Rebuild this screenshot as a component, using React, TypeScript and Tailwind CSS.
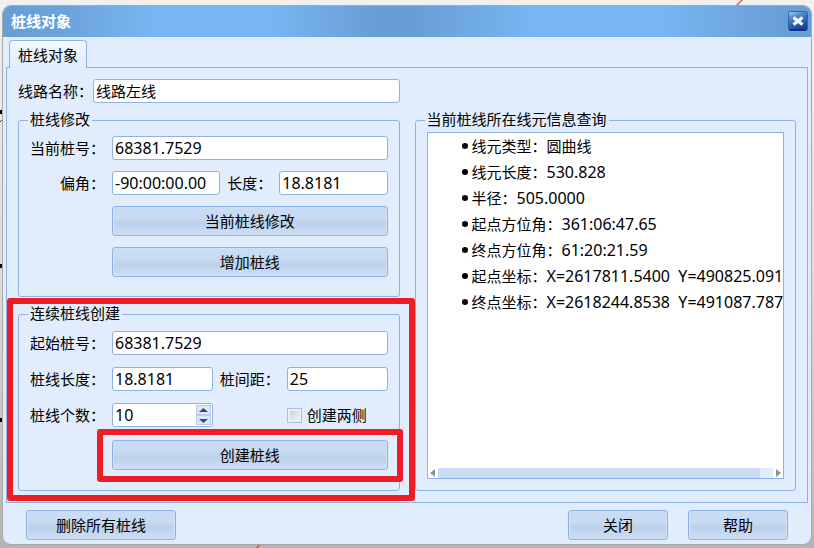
import type { ReactNode } from "react";

const LINE_INFO = [
  { label: "线元类型：", value: "圆曲线" },
  { label: "线元长度：", value: "530.828" },
  { label: "半径：", value: "505.0000" },
  { label: "起点方位角：", value: "361:06:47.65" },
  { label: "终点方位角：", value: "61:20:21.59" },
  { label: "起点坐标：", value: "X=2617811.5400  Y=490825.091" },
  { label: "终点坐标：", value: "X=2618244.8538  Y=491087.787" },
];

export default function App() {
  return (
    <div className="relative min-h-screen bg-linear-to-b from-[#f0f0f0] via-[#dcdcdc] to-[#b4b4b4] px-0.5 pt-[5px] pb-1 font-['Noto_Sans','Noto_Sans_CJK_SC',sans-serif] text-[15px] leading-5 text-black">
      <Drawing />
      <div className="relative overflow-hidden rounded-[9px] border border-[#a9a9a9] bg-[#e1edfc]">
        <TitleBar />
        <div className="px-[3px] pt-[3px]">
          <div role="tablist" className="relative -mb-px flex pl-[3px]">
            <button
              role="tab"
              aria-selected="true"
              className="h-7 rounded-t-[4px] border border-b-0 border-[#8db2e3] bg-linear-to-b from-[#f3f7fe] to-[#e1edfc] px-2"
            >
              桩线对象
            </button>
          </div>
          <main className="border border-[#8db2e3] p-[11px]">
            <div className="grid grid-cols-2 gap-x-[15px] gap-y-[7px]">
              <div className="flex items-center">
                <Label htmlFor="line-name">线路名称：</Label>
                <TextInput id="line-name" value="线路左线" cjk />
              </div>
              <div className="col-start-1 flex flex-col gap-[7px]">
                <ModifyGroup />
                <CreateGroup />
              </div>
              <InfoGroup />
            </div>
          </main>
        </div>
        <footer className="flex gap-5 px-[23px] pt-[7px] pb-1">
          <PushButton className="mr-auto w-[150px]">删除所有桩线</PushButton>
          <PushButton className="w-[100px]">关闭</PushButton>
          <PushButton className="w-[100px]">帮助</PushButton>
        </footer>
      </div>
    </div>
  );
}

/** Bits of the CAD drawing that stay visible around the dialog. */
function Drawing() {
  return (
    <svg className="absolute inset-0 h-full w-full" aria-hidden="true">
      <path d="M736 6 743 -1M256 549 261 543" stroke="#d9403a" strokeWidth="1.2" />
      <path d="M0 112h2M0 266h2M0 420h2" stroke="#000" strokeWidth="4" />
      <path d="M0 122 2 120" stroke="#2020d0" />
    </svg>
  );
}

function TitleBar() {
  return (
    <header className="flex h-[31px] items-start justify-between bg-[linear-gradient(90deg,#689ed6_0%,#6ba2da_7%,#78b6f4_19%,#78b6f4_33%,#689ed6_46%,#689ed6_51%,#78b6f4_66%,#78b6f4_81%,#689ed6_97%)] pt-[5px] pr-[3px] pl-2">
      <h1 className="font-bold text-white">桩线对象</h1>
      <button aria-label="关闭窗口">
        <svg width="20" height="20" viewBox="0 0 20 20">
          <defs>
            <linearGradient id="close-bg" x1="0" y1="0" x2="0.4" y2="1">
              <stop offset="0" stopColor="#a9d6f2" />
              <stop offset="0.3" stopColor="#5a93cd" />
              <stop offset="0.6" stopColor="#356bb3" />
              <stop offset="1" stopColor="#1a3f9c" />
            </linearGradient>
          </defs>
          <rect x="0.5" y="0.5" width="19" height="19" rx="2" fill="url(#close-bg)" stroke="#2f62ad" />
          <path d="M1.500 19h17" stroke="#0c2a85" strokeWidth="1.5" />
          <path d="M5.500 6.500 14.500 13.500M14.500 6.500 5.500 13.500" stroke="#fff" strokeWidth="3" />
        </svg>
      </button>
    </header>
  );
}

function ModifyGroup() {
  return (
    <Group title="桩线修改" className="px-[11px] pt-1.5 pb-[19px]">
      <div className="flex items-center gap-[7px]">
        <Label htmlFor="current-stake">当前桩号：</Label>
        <TextInput id="current-stake" value="68381.7529" />
      </div>
      <div className="mt-[11px] flex items-center gap-[7px]">
        <Label htmlFor="deflection">偏角：</Label>
        <TextInput id="deflection" value="-90:00:00.00" />
        <label htmlFor="length" className="shrink-0">长度：</label>
        <TextInput id="length" value="18.8181" />
      </div>
      <div className="mt-[11px] ml-[82px] flex flex-col gap-[11px]">
        <PushButton>当前桩线修改</PushButton>
        <PushButton>增加桩线</PushButton>
      </div>
    </Group>
  );
}

function CreateGroup() {
  return (
    <div className="relative">
      <Group title="连续桩线创建" className="px-[11px] pt-[7px] pb-5">
        <div className="flex items-center gap-[7px]">
          <Label htmlFor="start-stake">起始桩号：</Label>
          <TextInput id="start-stake" value="68381.7529" />
        </div>
        <div className="mt-3 flex items-center gap-[7px]">
          <Label htmlFor="stake-length">桩线长度：</Label>
          <TextInput id="stake-length" value="18.8181" />
          <label htmlFor="spacing" className="shrink-0">桩间距：</label>
          <TextInput id="spacing" value="25" />
        </div>
        <div className="mt-3 flex items-center gap-[7px]">
          <Label htmlFor="count">桩线个数：</Label>
          <div className="flex flex-1">
            <div className="flex h-6 min-w-0 flex-1 rounded-[3px] border border-[#8db2e3] bg-white p-px">
              <input
                id="count"
                inputMode="numeric"
                defaultValue="10"
                className="w-0 flex-1 px-px text-base leading-5 outline-none"
              />
              <div className="flex w-[15px] flex-col">
                <SpinButton label="增加" d="M2 5 6.500 1 11 5z" />
                <SpinButton label="减少" d="M2 2h9L6.500 6z" />
              </div>
            </div>
          </div>
          <label className="ml-[67px] flex flex-1 items-center gap-[5px] whitespace-nowrap">
            <input
              type="checkbox"
              className="size-[15px] shrink-0 appearance-none border border-[#a9bfdf] bg-linear-to-br from-[#c6cbd3] to-[#f6f7f9] shadow-[inset_0_0_0_2px_#e9eef5] checked:bg-[#5b87c4]"
            />
            创建两侧
          </label>
        </div>
        <div className="relative mt-[13px] ml-[82px] flex flex-col">
          <PushButton>创建桩线</PushButton>
          <Highlight className="-inset-x-[15px] -top-[11px] -bottom-3" />
        </div>
      </Group>
      <Highlight className="-top-1.5 -right-[15px] -bottom-2.5 -left-[11px]" />
    </div>
  );
}

function InfoGroup() {
  return (
    <Group title="当前桩线所在线元信息查询" className="flex flex-col px-[11px] pt-0.5 pb-[11px]">
      <div className="flex min-h-0 flex-1 flex-col border border-[#8db2e3] bg-white">
        <ul className="w-full flex-1 pl-[34px] leading-[26px] whitespace-pre">
          {LINE_INFO.map((item) => (
            <li key={item.label} className="flex h-[26px] items-center gap-1">
              <span className="size-1.5 shrink-0 rounded-full bg-black" />
              <span>
                {item.label}
                <span className={/\d/.test(item.value) ? "text-base leading-[26px]" : ""}>{item.value}</span>
              </span>
            </li>
          ))}
        </ul>
        <div className="flex h-2.5 items-center">
          <button aria-label="向左滚动" className="w-2.5">
            <svg width="10" height="10" viewBox="0 0 10 10">
              <path d="M7 1v8L2 5z" fill="#909090" />
            </svg>
          </button>
          <div className="h-full flex-1 bg-[#e1edfc]">
            <div className="h-full w-24/25 bg-[#c9dcf3]" />
          </div>
          <button aria-label="向右滚动" className="w-2.5">
            <svg width="10" height="10" viewBox="0 0 10 10">
              <path d="M3 1v8L8 5z" fill="#909090" />
            </svg>
          </button>
        </div>
      </div>
    </Group>
  );
}

function Group({ title, className, children }: { title: string; className: string; children: ReactNode }) {
  return (
    <fieldset className={`min-w-0 rounded-[3px] border border-[#8db2e3] ${className}`}>
      <legend className="-ml-0.5 h-5 px-0.5 leading-[18px]">{title}</legend>
      {children}
    </fieldset>
  );
}

function Label({ htmlFor, children }: { htmlFor: string; children: ReactNode }) {
  return (
    <label htmlFor={htmlFor} className="w-[75px] shrink-0 text-right whitespace-nowrap">
      {children}
    </label>
  );
}

function TextInput({ id, value, cjk = false }: { id: string; value: string; cjk?: boolean }) {
  return (
    <input
      id={id}
      type="text"
      defaultValue={value}
      className={`h-6 w-0 min-w-0 flex-1 rounded-[3px] border border-[#8db2e3] bg-white px-0.5 pb-px leading-5 outline-none ${cjk ? "text-[15px]" : "text-base"}`}
    />
  );
}

function PushButton({ className = "", children }: { className?: string; children: ReactNode }) {
  return (
    <button
      className={`h-[30px] rounded-[3px] border border-[#8db2e3] bg-[linear-gradient(180deg,#cbddf4_0%,#c7daf2_40%,#bdd0ec_58%,#c5d8f1_80%,#cfdff5_100%)] shadow-[inset_0_0_0_1px_#cfdff4] ${className}`}
    >
      {children}
    </button>
  );
}

function SpinButton({ label, d }: { label: string; d: string }) {
  return (
    <button aria-label={label} className="flex flex-1 items-center justify-center border border-[#b8cce8] bg-[#dbe7f7]">
      <svg width="13" height="7" viewBox="0 0 13 7">
        <path d={d} fill="#3b4a6b" />
      </svg>
    </button>
  );
}

/** Thick red call-out frame laid over the step being explained. */
function Highlight({ className }: { className: string }) {
  return <div className={`pointer-events-none absolute z-10 rounded-[3px] border-6 border-[#ee1c25] ${className}`} />;
}
